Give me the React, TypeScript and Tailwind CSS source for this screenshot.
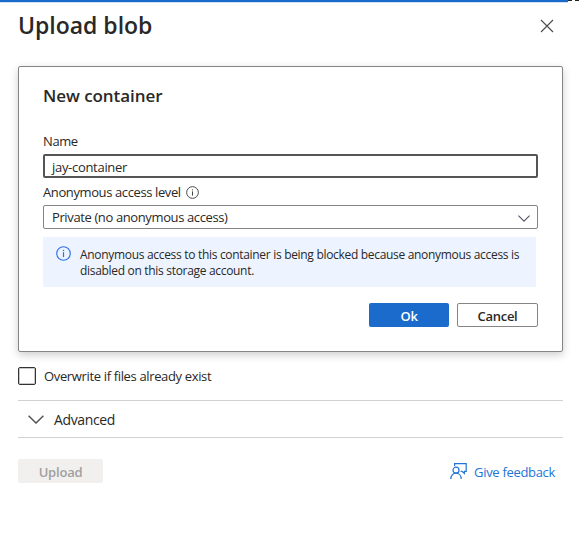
import React from "react";

function CloseIcon() {
  return (
    <svg width="14" height="14" viewBox="0 0 14 14" fill="none" stroke="#4a4a4a" strokeWidth="1.1">
      <path d="M1 1l12 12M13 1L1 13" />
    </svg>
  );
}

function InfoIcon({ size, color }: { size: number; color: string }) {
  return (
    <svg width={size} height={size} viewBox="0 0 16 16" fill="none" stroke={color}>
      <circle cx="8" cy="8" r="7.2" strokeWidth="1.2" />
      <path d="M8 6.6v5.2" strokeWidth="1.3" />
      <circle cx="8" cy="4.7" r="0.8" fill={color} stroke="none" />
    </svg>
  );
}

function Chevron({ width, color }: { width: number; color: string }) {
  return (
    <svg width={width} height={width / 2 + 1} viewBox="0 0 16 9" fill="none" stroke={color} strokeWidth="1.5">
      <path d="M0.6 0.7L8 8l7.4-7.3" />
    </svg>
  );
}

function FeedbackIcon() {
  return (
    <svg width="17" height="18" viewBox="0 0 17 18" fill="none" stroke="#2374d6" strokeWidth="1.2">
      <path d="M4.6 4V1.6H16.2V9.4H14.4V11.4L12 9.4H10.6" />
      <circle cx="6" cy="8.2" r="3" />
      <path d="M0.8 17c0-3.400 2.200-5.800 5.200-5.800s5.200 2.400 5.200 5.800" />
    </svg>
  );
}

export default function App() {
  return (
    <div className="flex h-[557px] w-[579px] flex-col overflow-hidden bg-white font-['Open_Sans','Noto_Sans',sans-serif] whitespace-nowrap text-[#292827]">
      <div className="flex h-0.5 shrink-0">
        <div className="w-[568px] bg-[#1b6bcc] shadow-[0_1px_0_#cfe0f5]" />
        <div className="mr-[3px] h-px w-1 bg-[#222]" />
        <div className="h-px w-1 bg-[#222]" />
      </div>

      <header className="flex h-16 shrink-0 items-start justify-between pr-[25px] pl-[18px]">
        <h1 className="mt-[7px] text-[23px] leading-8 font-semibold tracking-[-0.02px]">Upload blob</h1>
        <button className="mt-[17px]" aria-label="Close">
          <CloseIcon />
        </button>
      </header>

      <section className="ml-[18px] flex h-[286px] w-[545px] shrink-0 flex-col rounded-xs border border-[#858585] pl-6 shadow-[0_3px_8px_rgba(0,0,0,0.2)]">
        <h2 className="mt-[17px] text-[17px] leading-6 font-semibold tracking-[-0.06px]">New container</h2>
        <label className="mt-[25px] text-[13px] leading-4 tracking-[-0.4px]">Name</label>
        <div className="mt-[5px] flex h-6 w-[495px] items-center rounded-xs border-2 border-[#555] pt-[3px] pl-[7px] text-[13px] tracking-[-0.3px]">
          jay-container
        </div>
        <div className="mt-1.5 flex h-4 items-center gap-[5px] text-[13px] leading-4 tracking-[-0.39px]">
          <span>Anonymous access level</span>
          <InfoIcon size={13} color="#444" />
        </div>
        <div className="mt-[5px] flex h-6 w-[495px] items-center justify-between rounded-xs border border-[#858585] pt-0.5 pr-[7px] pl-2 text-[13px] tracking-[-0.38px]">
          <span>Private (no anonymous access)</span>
          <Chevron width={12} color="#555566" />
        </div>
        <div className="mt-2 flex h-[50px] w-[493px] gap-[9px] bg-[#edf4ff] pt-[9px] pl-[13px] text-[12px] leading-4 tracking-[-0.31px]">
          <InfoIcon size={15} color="#2f6fe0" />
          <p className="mt-px">
            Anonymous access to this container is being blocked because anonymous access is
            <br />
            disabled on this storage account.
          </p>
        </div>
        <div className="mt-4 flex w-[495px] justify-end gap-2 text-[13px] font-semibold tracking-[-0.3px]">
          <button className="h-6 w-20 rounded-xs bg-[#1b6bcc] pt-1 text-white">Ok</button>
          <button className="h-6 w-[81px] rounded-xs border border-[#858585] pt-[3px]">Cancel</button>
        </div>
      </section>

      <label className="mt-[15px] ml-[18px] flex h-[18px] shrink-0 items-center gap-2 text-[13px] tracking-[-0.35px]">
        <span className="size-[18px] rounded-xs border border-[#333] shadow-[inset_0_0_0_1px_#c8c8c8]" />
        <span className="pt-0.5">Overwrite if files already exist</span>
      </label>

      <div className="mt-[15px] ml-[18px] flex h-[38px] w-[545px] shrink-0 items-center gap-2.5 border-y border-[#d2d2d2] pl-2.5 text-[14px] tracking-[-0.38px]">
        <Chevron width={16} color="#555" />
        <span>Advanced</span>
      </div>

      <footer className="mt-[21px] ml-[18px] flex h-6 w-[545px] shrink-0 items-center justify-between pr-2 text-[13px] tracking-[-0.32px]">
        <button className="h-6 w-[85px] rounded-xs bg-[#f1f0ef] pt-1 font-semibold tracking-[-0.2px] text-[#a19f9d]" disabled>
          Upload
        </button>
        <a className="flex items-center gap-[7px] text-[#2374d6]">
          <FeedbackIcon />
          <span className="pt-[3px]">Give feedback</span>
        </a>
      </footer>
    </div>
  );
}
